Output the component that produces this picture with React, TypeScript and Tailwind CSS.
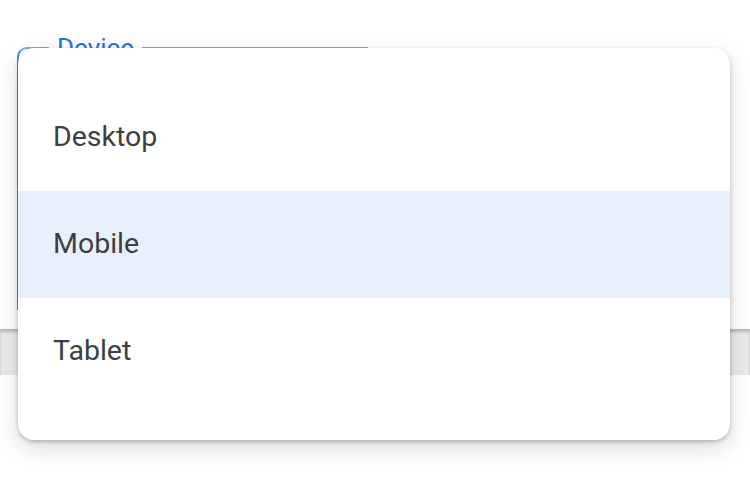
import React from "react";

export default function App() {
  const items = ["Desktop", "Mobile", "Tablet"];
  const selected = "Mobile";
  return (
    <div
      className="relative w-[750px] h-[492px] overflow-hidden bg-white"
      style={{ fontFamily: "Roboto, 'Noto Sans', sans-serif" }}
    >
      {/* background page */}
      <div className="flex flex-col">
        <div className="h-[47px]" />
        <div className="px-[17px] h-[282px]">
          <div className="relative w-[351px] h-[263px] rounded-tl-[10px] border-l-2 border-t-2 border-l-[#4a88ec] border-t-[#7aa9f5]">
            <span className="absolute left-[30px] top-[-14px] bg-white px-[8px] text-[26px] leading-[26px] text-[#1a73e8]">
              Device
            </span>
          </div>
        </div>
        <div className="h-[46px] bg-[#ebebeb] shadow-[inset_0_3px_3px_rgba(0,0,0,0.2)]" />
      </div>

      {/* menu overlay */}
      <div className="absolute left-[18px] top-[48px] w-[712px] h-[392px] rounded-[16px] bg-white py-[36px] shadow-[0_2px_4px_rgba(0,0,0,0.22),0_8px_24px_rgba(0,0,0,0.14)]">
        {items.map((it) => (
          <div
            key={it}
            className={`flex h-[107px] items-center pl-[35px] text-[28.5px] text-[#3c4043] ${
              it === selected ? "bg-[#e8f0fe]" : ""
            }`}
          >
            {it}
          </div>
        ))}
      </div>
    </div>
  );
}
